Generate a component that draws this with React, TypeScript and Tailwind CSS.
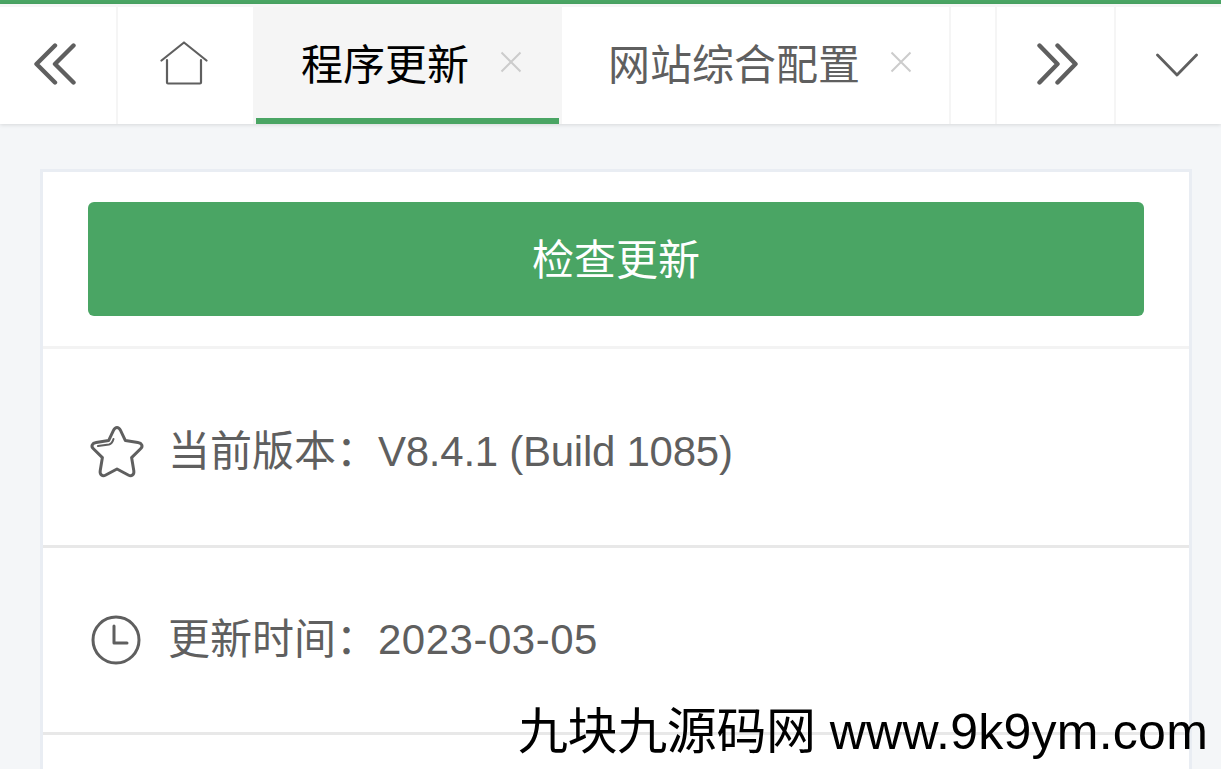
const CJK = "font-['Liberation_Sans','Noto_Sans_CJK_SC',sans-serif]";

function DoubleLeft() {
  return (
    <svg width="42" height="42" viewBox="0 0 42 42" fill="none" stroke="#5f5f5f" strokeWidth="4.4" strokeLinecap="round" strokeLinejoin="round">
      <path d="M21 2.5 L2.5 21 L21 39.5" />
      <path d="M39.5 2.5 L21 21 L39.5 39.5" />
    </svg>
  );
}

function DoubleRight() {
  return (
    <svg width="41" height="42" viewBox="0 0 41 42" fill="none" stroke="#5f5f5f" strokeWidth="4.4" strokeLinecap="round" strokeLinejoin="round">
      <path d="M2.5 2.5 L20.5 21 L2.5 39.5" />
      <path d="M20.5 2.5 L38.5 21 L20.5 39.5" />
    </svg>
  );
}

function Home() {
  return (
    <svg width="48" height="44" viewBox="0 0 48 44" fill="none" stroke="#5f5f5f" strokeWidth="2.2" strokeLinecap="round" strokeLinejoin="round">
      <path d="M1.5 19.5 L24 1.5 L46.5 19.5" />
      <path d="M7 19 V41.5 Q7 42.5 8 42.5 H40 Q41 42.5 41 41.5 V19" />
    </svg>
  );
}

function Close() {
  return (
    <svg className="mb-[8px]" width="24" height="24" viewBox="0 0 24 24" fill="none" stroke="#cccccc" strokeWidth="2">
      <path d="M2.5 2.5 L21.5 21.5 M21.5 2.5 L2.5 21.5" />
    </svg>
  );
}

function Chevron() {
  return (
    <svg width="42" height="24" viewBox="0 0 42 24" fill="none" stroke="#5f5f5f" strokeWidth="2.8" strokeLinecap="round" strokeLinejoin="round">
      <path d="M1.5 2 L21 22 L40.5 2" />
    </svg>
  );
}

function Star() {
  return (
    <svg width="56" height="54" viewBox="0 0 56 54" fill="none" stroke="#5f5f5f" strokeWidth="3" strokeLinecap="round" strokeLinejoin="round">
      <path d="M28 2.5 C29.6 2.5 30.6 3.6 31.4 5.2 L36.4 15.6 L48.8 17.4 C52.8 18 54.4 21 51.6 23.8 L42.6 32.6 L44.8 45.8 C45.4 49.8 42.6 51.8 39.2 50 L28 44 L16.8 50 C13.4 51.8 10.6 49.8 11.2 45.8 L13.4 32.6 L4.4 23.8 C1.6 21 3.2 18 7.2 17.4 L19.6 15.6 L24.6 5.2 C25.4 3.6 26.4 2.5 28 2.5 Z" />
      <path d="M9 21 L20 19.5 C22 19 23.5 17.5 24.5 14" strokeWidth="2" />
    </svg>
  );
}

function Clock() {
  return (
    <svg width="50" height="50" viewBox="0 0 50 50" fill="none" stroke="#5f5f5f" strokeWidth="3" strokeLinecap="round" strokeLinejoin="round">
      <circle cx="25" cy="25" r="23" />
      <path d="M23 11 V28 H36" />
    </svg>
  );
}

function Sep() {
  return <div className="w-[2px] self-stretch bg-[#f5f5f5] shrink-0" />;
}

export default function App() {
  return (
    <div className={`${CJK} relative w-[1221px] h-[769px] overflow-hidden bg-[#f4f6f8]`}>
      <div className="h-[4px] bg-[#4aa564]" />
      <div className="h-[120px] bg-white flex shadow-[0_1px_4px_rgba(0,0,0,0.12)] border-t-[3px] border-[#f6f6f6] text-[42px] leading-none">
        <div className="w-[116px] shrink-0 flex items-center justify-center pr-[6px] pb-[4px]">
          <DoubleLeft />
        </div>
        <Sep />
        <div className="w-[135px] shrink-0 flex items-center justify-center pr-[3px] pb-[6px]">
          <Home />
        </div>
        <div className="w-[309px] shrink-0 bg-[#f5f5f5] flex flex-col">
          <div className="flex-1 flex items-center gap-[30px] pl-[48px] pt-[6px] text-black">
            <span>程序更新</span>
            <Close />
          </div>
          <div className="h-[6px] mx-[3px] bg-[#4aa564]" />
        </div>
        <div className="w-[387px] shrink-0 flex items-center gap-[29px] pl-[46px] text-[#5f5f5f]">
          <span>网站综合配置</span>
          <Close />
        </div>
        <Sep />
        <div className="w-[44px] shrink-0" />
        <Sep />
        <div className="w-[117px] shrink-0 flex items-center justify-center pl-[3px] pb-[4px]">
          <DoubleRight />
        </div>
        <Sep />
        <div className="flex-1 flex items-center justify-center pl-[16px] pb-[2px]">
          <Chevron />
        </div>
      </div>

      <div className="mt-[45px] ml-[40px] w-[1152px] bg-white border-[3px] border-b-0 border-[#e9edf3] text-[42px] leading-none text-[#5f5f5f]">
        <div className="h-[177px] px-[45px] pt-[30px] border-b-[3px] border-[#f3f3f3]">
          <div className="h-[114px] rounded-[6px] bg-[#4aa564] text-white flex items-center justify-center pt-[4px]">
            检查更新
          </div>
        </div>
        <div className="h-[199px] pl-[46px] pt-[10px] flex items-center gap-[23px] border-b-[3px] border-[#e8e8e8]">
          <Star />
          <span>当前版本：<span className="tracking-[-0.26px]">V8.4.1 (Build 1085)</span></span>
        </div>
        <div className="h-[187px] pl-[48px] flex items-center gap-[27px] border-b-[3px] border-[#e8e8e8]">
          <Clock />
          <span>更新时间：<span className="tracking-[0.5px]">2023-03-05</span></span>
        </div>
        <div className="h-[40px]" />
      </div>

      <div className="absolute left-[518px] top-[703px] text-[50px] leading-[58px] text-black whitespace-nowrap">
        <span className="tracking-[-0.4px]">九块九源码网</span>
        <span className="tracking-[0.25px]"> www.9k9ym.com</span>
      </div>
    </div>
  );
}
